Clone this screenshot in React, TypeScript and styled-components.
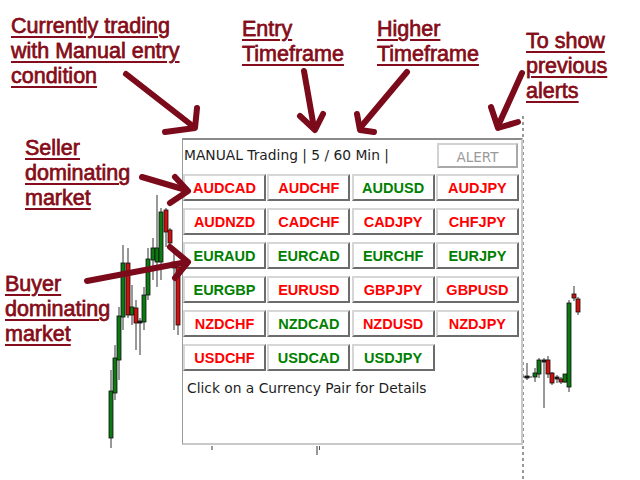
import styled, { createGlobalStyle } from 'styled-components';

const GlobalStyle = createGlobalStyle`
  html, body {
    margin: 0;
    padding: 0;
    background: #ffffff;
  }
`;

const MAROON = '#850c1d';

const Stage = styled.div`
  position: relative;
  width: 640px;
  height: 480px;
  box-sizing: border-box;
  padding: 138px 0 0 182px;
  overflow: hidden;
  background: #ffffff;
  font-family: 'DejaVu Sans', Verdana, sans-serif;
`;

const Chart = styled.svg`
  position: absolute;
  left: 0;
  top: 0;
  z-index: 0;
`;

const Arrows = styled.svg`
  position: absolute;
  left: 0;
  top: 0;
  z-index: 3;
  pointer-events: none;
`;

const Note = styled.div<{ $x: number; $y: number }>`
  position: absolute;
  left: ${p => p.$x}px;
  top: ${p => p.$y}px;
  z-index: 2;
  font-family: 'Liberation Sans', Arial, sans-serif;
  font-size: 21.5px;
  line-height: 25px;
  color: ${MAROON};
  white-space: nowrap;
  -webkit-text-stroke: 0.4px ${MAROON};
  text-shadow: 0 0 1px #f3d9a8;

  span {
    text-decoration: underline;
    text-decoration-thickness: 2px;
    text-underline-offset: 3px;
  }
`;

const Panel = styled.section`
  position: relative;
  z-index: 1;
  width: 341px;
  height: 307px;
  box-sizing: border-box;
  background: #ffffff;
  border-top: 2px solid #8a8a8a;
  border-left: 1px solid #9a9a9a;
  border-right: 2px solid #c9c9c9;
  border-bottom: 2px solid #c9c9c9;
  display: flex;
  flex-direction: column;
`;

const Header = styled.div`
  height: 25px;
  margin-top: 3px;
  padding: 0 3px 0 1px;
  display: flex;
  align-items: center;
  justify-content: space-between;
`;

const Status = styled.span`
  font-size: 13.8px;
  color: #1e1e1e;
  margin-top: -2px;
`;

const AlertButton = styled.button`
  width: 81px;
  height: 25px;
  box-sizing: border-box;
  padding: 2px 0 0;
  background: #ffffff;
  border-top: 2px solid #d2d2d2;
  border-left: 2px solid #d2d2d2;
  border-right: 2px solid #a9a9a9;
  border-bottom: 2px solid #a9a9a9;
  font-family: 'DejaVu Sans', Verdana, sans-serif;
  font-size: 13.5px;
  color: #9a9a9a;
`;

const PairGrid = styled.div`
  margin-top: 6px;
  display: grid;
  grid-template-columns: repeat(4, 83px);
  grid-auto-rows: 27px;
  column-gap: 1.3px;
  row-gap: 7px;
`;

const PairButton = styled.button<{ $up: boolean }>`
  box-sizing: border-box;
  padding: 0;
  background: #ffffff;
  border-top: 2px solid #d6d6d6;
  border-left: 2px solid #d6d6d6;
  border-right: 2px solid #6c6c6c;
  border-bottom: 2px solid #6c6c6c;
  font-family: 'Liberation Sans', Arial, sans-serif;
  font-weight: bold;
  font-size: 14.5px;
  color: ${p => (p.$up ? '#008000' : '#ff0000')};
`;

const Hint = styled.div`
  margin-top: 9px;
  padding-left: 4px;
  font-size: 13.8px;
  line-height: 16px;
  color: #1e1e1e;
`;

type Pair = [string, boolean];

const pairs: Pair[] = [
  ['AUDCAD', false], ['AUDCHF', false], ['AUDUSD', true], ['AUDJPY', false],
  ['AUDNZD', false], ['CADCHF', false], ['CADJPY', false], ['CHFJPY', false],
  ['EURAUD', true], ['EURCAD', true], ['EURCHF', true], ['EURJPY', true],
  ['EURGBP', true], ['EURUSD', false], ['GBPJPY', false], ['GBPUSD', false],
  ['NZDCHF', false], ['NZDCAD', true], ['NZDUSD', false], ['NZDJPY', false],
  ['USDCHF', false], ['USDCAD', true], ['USDJPY', true],
];

// x, wick top, wick bottom, body top, body bottom, colour
type Candle = [number, number, number, number, number, 'g' | 'r' | 'k'];

const candles: Candle[] = [
  [111, 370, 448, 391, 438, 'g'],
  [115, 345, 400, 358, 393, 'g'],
  [119, 307, 380, 316, 360, 'g'],
  [123, 245, 330, 263, 317, 'g'],
  [128, 248, 318, 263, 315, 'r'],
  [132, 285, 325, 307, 315, 'g'],
  [136, 300, 350, 308, 323, 'r'],
  [140, 318, 355, 321, 323, 'k'],
  [144, 287, 330, 295, 322, 'g'],
  [148, 248, 300, 259, 295, 'g'],
  [153, 238, 280, 248, 260, 'g'],
  [157, 195, 287, 248, 262, 'g'],
  [161, 208, 280, 212, 262, 'g'],
  [166, 208, 247, 210, 232, 'r'],
  [170, 228, 247, 230, 243, 'r'],
  [174, 247, 330, 262, 268, 'r'],
  [178, 262, 335, 267, 325, 'r'],
  [527, 363, 380, 376, 378, 'k'],
  [535, 368, 382, 373, 377, 'g'],
  [539, 358, 378, 360, 374, 'g'],
  [544, 358, 408, 360, 362, 'k'],
  [548, 356, 378, 360, 374, 'r'],
  [552, 372, 385, 373, 383, 'r'],
  [557, 375, 383, 377, 379, 'k'],
  [561, 377, 384, 379, 382, 'r'],
  [565, 374, 383, 374, 382, 'g'],
  [569, 300, 392, 303, 387, 'g'],
  [574, 286, 301, 294, 298, 'r'],
  [578, 297, 315, 299, 312, 'r'],
];

const fills = { g: '#0b7a12', r: '#d01010', k: '#222222' };

// shaft points and head points
const arrows: [string, string][] = [
  ['126,74 194,127', '165,132 195,128 197,108'],
  ['304,71 314,128', '300,116 315,130 323,114'],
  ['407,72 360,128', '357,114 360,130 374,132'],
  ['522,73 498,126', '491,107 498,128 518,122'],
  ['142,177 186,190', '175,177 188,191 170,203'],
  ['87,281 187,262', '170,247 188,262 175,278'],
];

export default function App() {
  return (
    <>
      <GlobalStyle />
      <Stage>
        <Chart width={640} height={480} viewBox="0 0 640 480">
          <line x1={523} y1={116} x2={523} y2={480} stroke="#333" strokeWidth={1} strokeDasharray="3 3" />
          <line x1={523} y1={377} x2={532} y2={377} stroke="#333" strokeWidth={1} />
          <line x1={212} y1={446} x2={212} y2={450} stroke="#333" strokeWidth={1} />
          <line x1={317} y1={446} x2={317} y2={455} stroke="#333" strokeWidth={1} />
          <line x1={319.5} y1={446} x2={319.5} y2={450} stroke="#555" strokeWidth={1} />
          {candles.map(([x, wt, wb, bt, bb, c], i) => (
            <g key={i}>
              <line x1={x} y1={wt} x2={x} y2={wb} stroke="#333" strokeWidth={1} />
              <rect
                x={x - 2}
                y={bt}
                width={4}
                height={Math.max(bb - bt, 1.5)}
                fill={fills[c]}
                stroke="#111"
                strokeWidth={0.8}
              />
            </g>
          ))}
        </Chart>

        <Note $x={11} $y={14}>
          <span>Currently trading</span>
          <br />
          <span>with Manual entry</span>
          <br />
          <span>condition</span>
        </Note>
        <Note $x={242} $y={17}>
          <span>Entry</span>
          <br />
          <span>Timeframe</span>
        </Note>
        <Note $x={377} $y={17}>
          <span>Higher</span>
          <br />
          <span>Timeframe</span>
        </Note>
        <Note $x={526} $y={29}>
          <span>To show</span>
          <br />
          <span>previous</span>
          <br />
          <span>alerts</span>
        </Note>
        <Note $x={25} $y={136}>
          <span>Seller</span>
          <br />
          <span>dominating</span>
          <br />
          <span>market</span>
        </Note>
        <Note $x={5} $y={272}>
          <span>Buyer</span>
          <br />
          <span>dominating</span>
          <br />
          <span>market</span>
        </Note>

        <Panel>
          <Header>
            <Status>MANUAL Trading | 5 / 60 Min |</Status>
            <AlertButton>ALERT</AlertButton>
          </Header>
          <PairGrid>
            {pairs.map(([name, up]) => (
              <PairButton key={name} $up={up}>
                {name}
              </PairButton>
            ))}
          </PairGrid>
          <Hint>Click on a Currency Pair for Details</Hint>
        </Panel>

        <Arrows width={640} height={480} viewBox="0 0 640 480">
          {arrows.map(([shaft, head], i) => (
            <g key={i} fill="none" stroke="#7b0a1b" strokeWidth={6} strokeLinecap="round" strokeLinejoin="round">
              <polyline points={shaft} />
              <polyline points={head} />
            </g>
          ))}
        </Arrows>
      </Stage>
    </>
  );
}
